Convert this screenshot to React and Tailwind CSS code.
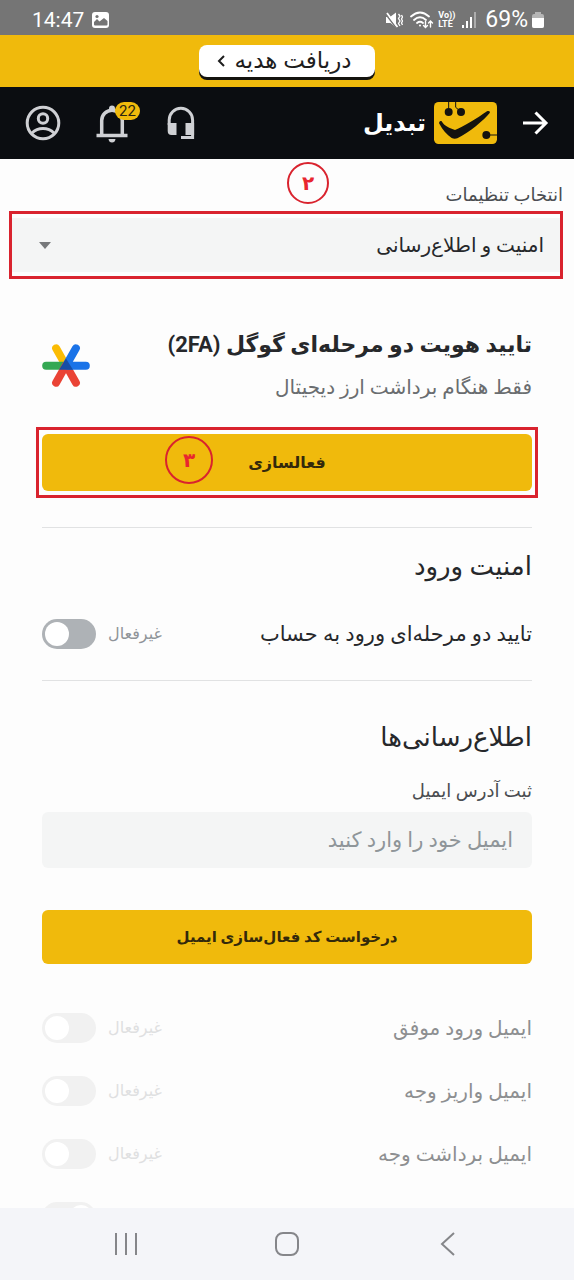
import { useState } from 'react';

const emailAlerts = [
  { id: 'login', label: 'ایمیل ورود موفق', on: false },
  { id: 'deposit', label: 'ایمیل واریز وجه', on: false },
  { id: 'withdraw', label: 'ایمیل برداشت وجه', on: false },
  { id: 'offers', label: 'پیشنهادها', on: true },
];

function StatusBar() {
  return (
    <div className="flex h-[35px] shrink-0 items-center justify-between bg-[#757575] pl-8 pr-[30px] pt-1 text-white">
      <div className="flex items-center gap-2">
        <span className="text-[21px] leading-6">14:47</span>
        <svg className="h-4 w-[17px]" viewBox="0 0 17 16">
          <rect width="17" height="16" rx="3" fill="#fff" />
          <circle cx="5" cy="4.5" r="1.6" fill="#757575" />
          <path d="M2 12.5V10l3-3 2.5 2.5L12 6l3.5 3v3.5q0 1-1 1H3q-1 0-1-1z" fill="#757575" />
        </svg>
      </div>
      <div className="flex items-center">
        <svg className="mr-[7px] h-[18px] w-[17px]" viewBox="0 0 17 18">
          <path d="M0 6h4L10 1.500v15L4.500 12H0z" fill="#fff" />
          <path d="M0 3.500l10 13" stroke="#757575" strokeWidth="1.500" />
          <path d="M1 2l10.500 14" stroke="#fff" strokeWidth="1.800" />
          <path d="M12.500 3l1.500 2-1.500 2.500L14 10l-1.500 2.500L14 15M15.500 4l1 2-1 2 1 2-1 2 1 2" fill="none" stroke="#fff" strokeWidth="1.300" />
        </svg>
        <svg className="mr-1 h-[18px] w-6" viewBox="0 0 24 18" fill="none" stroke="#fff" strokeWidth="1.800" strokeLinecap="round">
          <path d="M1 5.500Q10-2.500 19 5.500M4 9Q10 3.500 16 9M7 12q3-2.500 6 0" />
          <circle cx="10" cy="14.500" r="1" fill="#fff" stroke="none" />
          <path d="M15.500 10.500v5.500M13.500 14.500l2 2 2-2M20.500 16v-5.500M18.500 12l2-2 2 2" strokeWidth="1.400" />
        </svg>
        <span className="mr-[7px] flex flex-col text-[9px] font-bold leading-[9px]">
          <span>Vo))</span>
          <span>LTE</span>
        </span>
        <svg className="mr-2 h-4 w-[15px]" viewBox="0 0 15 16" fill="#fff">
          <rect x="0" y="13" width="2" height="3" />
          <rect x="4" y="9" width="2" height="7" />
          <rect x="8" y="5" width="2" height="11" />
          <rect x="12" y="0" width="2" height="16" opacity="0.4" />
        </svg>
        <span className="mr-1 text-[23px] leading-6">69%</span>
        <svg className="h-4 w-[12px]" viewBox="0 0 12 16">
          <path d="M3 0h6v2h1q2 0 2 2v10q0 2-2 2H2q-2 0-2-2V4q0-2 2-2h1z" fill="#b5b5b5" />
          <path d="M0 6h12v8q0 2-2 2H2q-2 0-2-2z" fill="#fff" />
        </svg>
      </div>
    </div>
  );
}

function Logo() {
  return (
    <svg className="h-[42px] w-[63px]" viewBox="0 0 189 126">
      <rect width="189" height="126" rx="14" fill="#f0ba0c" />
      <g fill="#14130f">
        <circle cx="44" cy="30" r="12" />
        <circle cx="81" cy="30" r="12" />
        <circle cx="157" cy="99" r="12" />
        <path d="M16 60c2-4 7-4 9 1 6 11 22 18 38 23 20-7 68-36 96-56 5-3 11 0 8 5-16 20-60 58-97 76-5 2-12 2-17-1-14-9-28-24-36-41-2-3-2-5-1-7z" />
      </g>
      <path d="M44 0v20M65 0v16l12 10M160 99h29" fill="none" stroke="#14130f" strokeWidth="3" />
    </svg>
  );
}

function Header() {
  return (
    <header className="flex h-[72px] shrink-0 items-center justify-between bg-[#0b0d11] pl-[25px] pr-[21px]">
      <div className="flex items-center gap-[33px] text-[#cfd0d4]">
        <button aria-label="حساب کاربری">
          <svg className="size-9" viewBox="0 0 36 36" fill="none" stroke="currentColor" strokeWidth="3">
            <circle cx="18" cy="18" r="15.800" />
            <circle cx="18" cy="13.500" r="4.700" />
            <path d="M7 28q4.500-4.500 11-4.500T29 28" />
          </svg>
        </button>
        <button aria-label="اعلان‌ها" className="relative">
          <svg className="size-9 overflow-visible" viewBox="0 0 36 36" fill="none" stroke="currentColor" strokeWidth="3.500">
            <path d="M7.700 30V15.500a10.300 10.300 0 0 1 20.600 0V30" />
            <path d="M2.500 30.500h31" />
            <path d="M15 5V3.500a3 3 0 0 1 6 0V5z" fill="currentColor" stroke="none" />
            <path d="M14.500 34h7q-.5 3.500-3.500 3.500t-3.500-3.500z" fill="currentColor" stroke="none" />
          </svg>
          <span className="absolute -top-[3px] left-[21px] flex h-[18px] w-[25px] items-center justify-center rounded-full bg-[#f0ba0c] text-[15px] leading-4 text-[#2b2510]">
            22
          </span>
        </button>
        <button aria-label="پشتیبانی">
          <svg className="size-9" viewBox="0 0 36 36" fill="none" stroke="currentColor" strokeWidth="3">
            <path d="M6.200 20v-5a11.700 11.700 0 0 1 23.400 0v17.500H18" />
            <path d="M4.700 18H13.500v12H8.500q-3.800 0-3.800-4zM22.500 18h8.600v12h-8.600z" fill="currentColor" stroke="none" />
          </svg>
        </button>
      </div>
      <div className="flex items-center">
        <span className="mr-2 text-2xl font-bold leading-9 text-white">تبدیل</span>
        <Logo />
        <button aria-label="بازگشت" className="ml-5">
          <svg className="size-9" viewBox="0 0 36 36" fill="none" stroke="#fff" strokeWidth="3">
            <path d="M6 18h23M18.500 7.500L29 18 18.500 28.500" />
          </svg>
        </button>
      </div>
    </header>
  );
}

function AuthenticatorIcon() {
  return (
    <svg className="h-[43px] w-12 shrink-0" viewBox="0 0 144 130">
      <g strokeWidth="24" strokeLinecap="round">
        <path d="M72 66L42 13" stroke="#fbbc04" />
        <path d="M72 66H12" stroke="#34a853" />
        <path d="M72 64L42 117M72 64l30 53" stroke="#ea4335" />
        <path d="M78 66h54M78 55l24-42" stroke="#1a73e8" />
      </g>
      <path d="M72 44L51 78h42z" fill="#174ea6" />
    </svg>
  );
}

function Marker({ children, className }) {
  return (
    <span className={`absolute flex items-center justify-center rounded-full border-2 border-[#d9232e] font-bold text-[#e8262f] ${className}`}>
      {children}
    </span>
  );
}

function SwitchRow({ id, label, checked, onChange, disabled }) {
  return (
    <div className="flex h-[30px] items-center justify-between">
      <label htmlFor={id} className={disabled ? 'text-xl leading-7 text-[#8d8f91]' : 'text-[21px] leading-7 text-[#26282b]'}>
        {label}
      </label>
      <div className="flex items-center gap-3">
        <span className={disabled ? 'text-base leading-6 text-[#dfe0e1]' : 'text-base leading-6 text-[#8f9499]'}>
          {checked ? 'فعال' : 'غیرفعال'}
        </span>
        <input
          id={id}
          type="checkbox"
          role="switch"
          dir="ltr"
          checked={checked}
          onChange={onChange}
          disabled={disabled}
          className="h-[30px] w-[54px] appearance-none rounded-full bg-[#aeb2b6] p-[3px] before:block before:size-6 before:rounded-full before:bg-white checked:before:translate-x-6 disabled:bg-[#f1f1f1]"
        />
      </div>
    </div>
  );
}

export default function App() {
  const [section, setSection] = useState('security');
  const [email, setEmail] = useState('');
  const [twoStep, setTwoStep] = useState(false);

  return (
    <div className="flex h-screen flex-col bg-[#fdfdfd] font-[Roboto,'DejaVu_Sans',sans-serif]">
      <StatusBar />

      <div className="flex h-[52px] shrink-0 items-center justify-center bg-[#f0ba0c]">
        <button dir="rtl" className="flex h-8 items-center gap-2.5 rounded-lg bg-white pl-[18px] pr-6 text-[23px] leading-6 text-[#1d1d1d] shadow-[0_3px_0_#14130f]">
          <span>دریافت هدیه</span>
          <svg className="h-3 w-2" viewBox="0 0 8 12" fill="none" stroke="currentColor" strokeWidth="2">
            <path d="M7 1L2 6l5 5" />
          </svg>
        </button>
      </div>

      <Header />

      <main dir="rtl" className="min-h-0 flex-1 overflow-y-auto pt-6 [scrollbar-width:none]">
        <div className="relative px-[11px]">
          <label htmlFor="section" className="block text-lg leading-6 text-[#4a4d51]">
            انتخاب تنظیمات
          </label>
          <Marker className="-top-[21px] left-[287px] size-[42px] text-xl">۲</Marker>
          <div className="relative -ml-0.5 mt-1 border-[3px] border-[#d9232e] py-1">
            <select
              id="section"
              value={section}
              onChange={(e) => setSection(e.target.value)}
              className="h-[54px] w-full appearance-none bg-[#f4f5f5] px-4 text-xl text-[#26282b]"
            >
              <option value="security">امنیت و اطلاع‌رسانی</option>
            </select>
            <svg className="pointer-events-none absolute left-[27px] top-7 h-[7px] w-3" viewBox="0 0 12 7">
              <path d="M0 0h12L6 7z" fill="#77797b" />
            </svg>
          </div>
        </div>

        <div className="px-[42px]">
          <div className="mt-[50px] flex items-center justify-between">
            <div>
              <h2 className="text-[22px] font-bold leading-8 text-[#26282b]">تایید هویت دو مرحله‌ای گوگل (2FA)</h2>
              <p className="mt-3 text-xl leading-7 text-[#6a6d70]">فقط هنگام برداشت ارز دیجیتال</p>
            </div>
            <AuthenticatorIcon />
          </div>

          <div className="relative -mx-1.5 mt-[26px] border-[3px] border-[#d9232e] px-[3px] py-1">
            <button className="h-[57px] w-full rounded-md bg-[#f0ba0c] text-base font-bold text-[#33290b]">فعالسازی</button>
            <Marker className="left-[126px] top-1.5 size-12 text-xl">۳</Marker>
          </div>

          <hr className="mt-[29px] border-[#e1e2e3]" />

          <h3 className="mt-[22px] text-[26px] leading-8 text-[#26282b]">امنیت ورود</h3>
          <div className="mt-[37px]">
            <SwitchRow
              id="two-step"
              label="تایید دو مرحله‌ای ورود به حساب"
              checked={twoStep}
              onChange={(e) => setTwoStep(e.target.checked)}
            />
          </div>

          <hr className="mt-[31px] border-[#e1e2e3]" />

          <h3 className="mt-10 text-[26px] leading-8 text-[#26282b]">اطلاع‌رسانی‌ها</h3>
          <label htmlFor="email" className="mt-[26px] block text-lg leading-6 text-[#4a4d51]">
            ثبت آدرس ایمیل
          </label>
          <input
            id="email"
            type="text"
            value={email}
            onChange={(e) => setEmail(e.target.value)}
            placeholder="ایمیل خود را وارد کنید"
            className="mt-[9px] block h-14 w-full rounded-md bg-[#f4f5f5] px-[19px] text-[21px] text-[#26282b] placeholder:text-[#8f9599]"
          />
          <button className="mt-[42px] h-[54px] w-full rounded-md bg-[#f0ba0c] text-[15px] font-bold text-[#33290b]">
            درخواست کد فعال‌سازی ایمیل
          </button>

          <div className="mt-[49px] flex flex-col gap-[33px]">
            {emailAlerts.map((alert) => (
              <SwitchRow key={alert.id} id={alert.id} label={alert.label} checked={alert.on} disabled />
            ))}
          </div>
        </div>
      </main>

      <nav className="flex h-[72px] shrink-0 items-center bg-[#f4f5f9] px-[45px] text-[#85868a]">
        <button aria-label="Recent apps" className="flex flex-1 justify-center">
          <svg className="size-6" viewBox="0 0 24 24" stroke="currentColor" strokeWidth="2">
            <path d="M2 1v22M12 1v22M22 1v22" />
          </svg>
        </button>
        <button aria-label="Home" className="flex flex-1 justify-center">
          <svg className="size-6" viewBox="0 0 24 24" fill="none" stroke="currentColor" strokeWidth="2">
            <rect x="1" y="1" width="22" height="22" rx="7" />
          </svg>
        </button>
        <button aria-label="Back" className="flex flex-1 justify-center">
          <svg className="size-6" viewBox="0 0 24 24" fill="none" stroke="currentColor" strokeWidth="2">
            <path d="M18 1L6 12l12 11" />
          </svg>
        </button>
      </nav>
    </div>
  );
}
